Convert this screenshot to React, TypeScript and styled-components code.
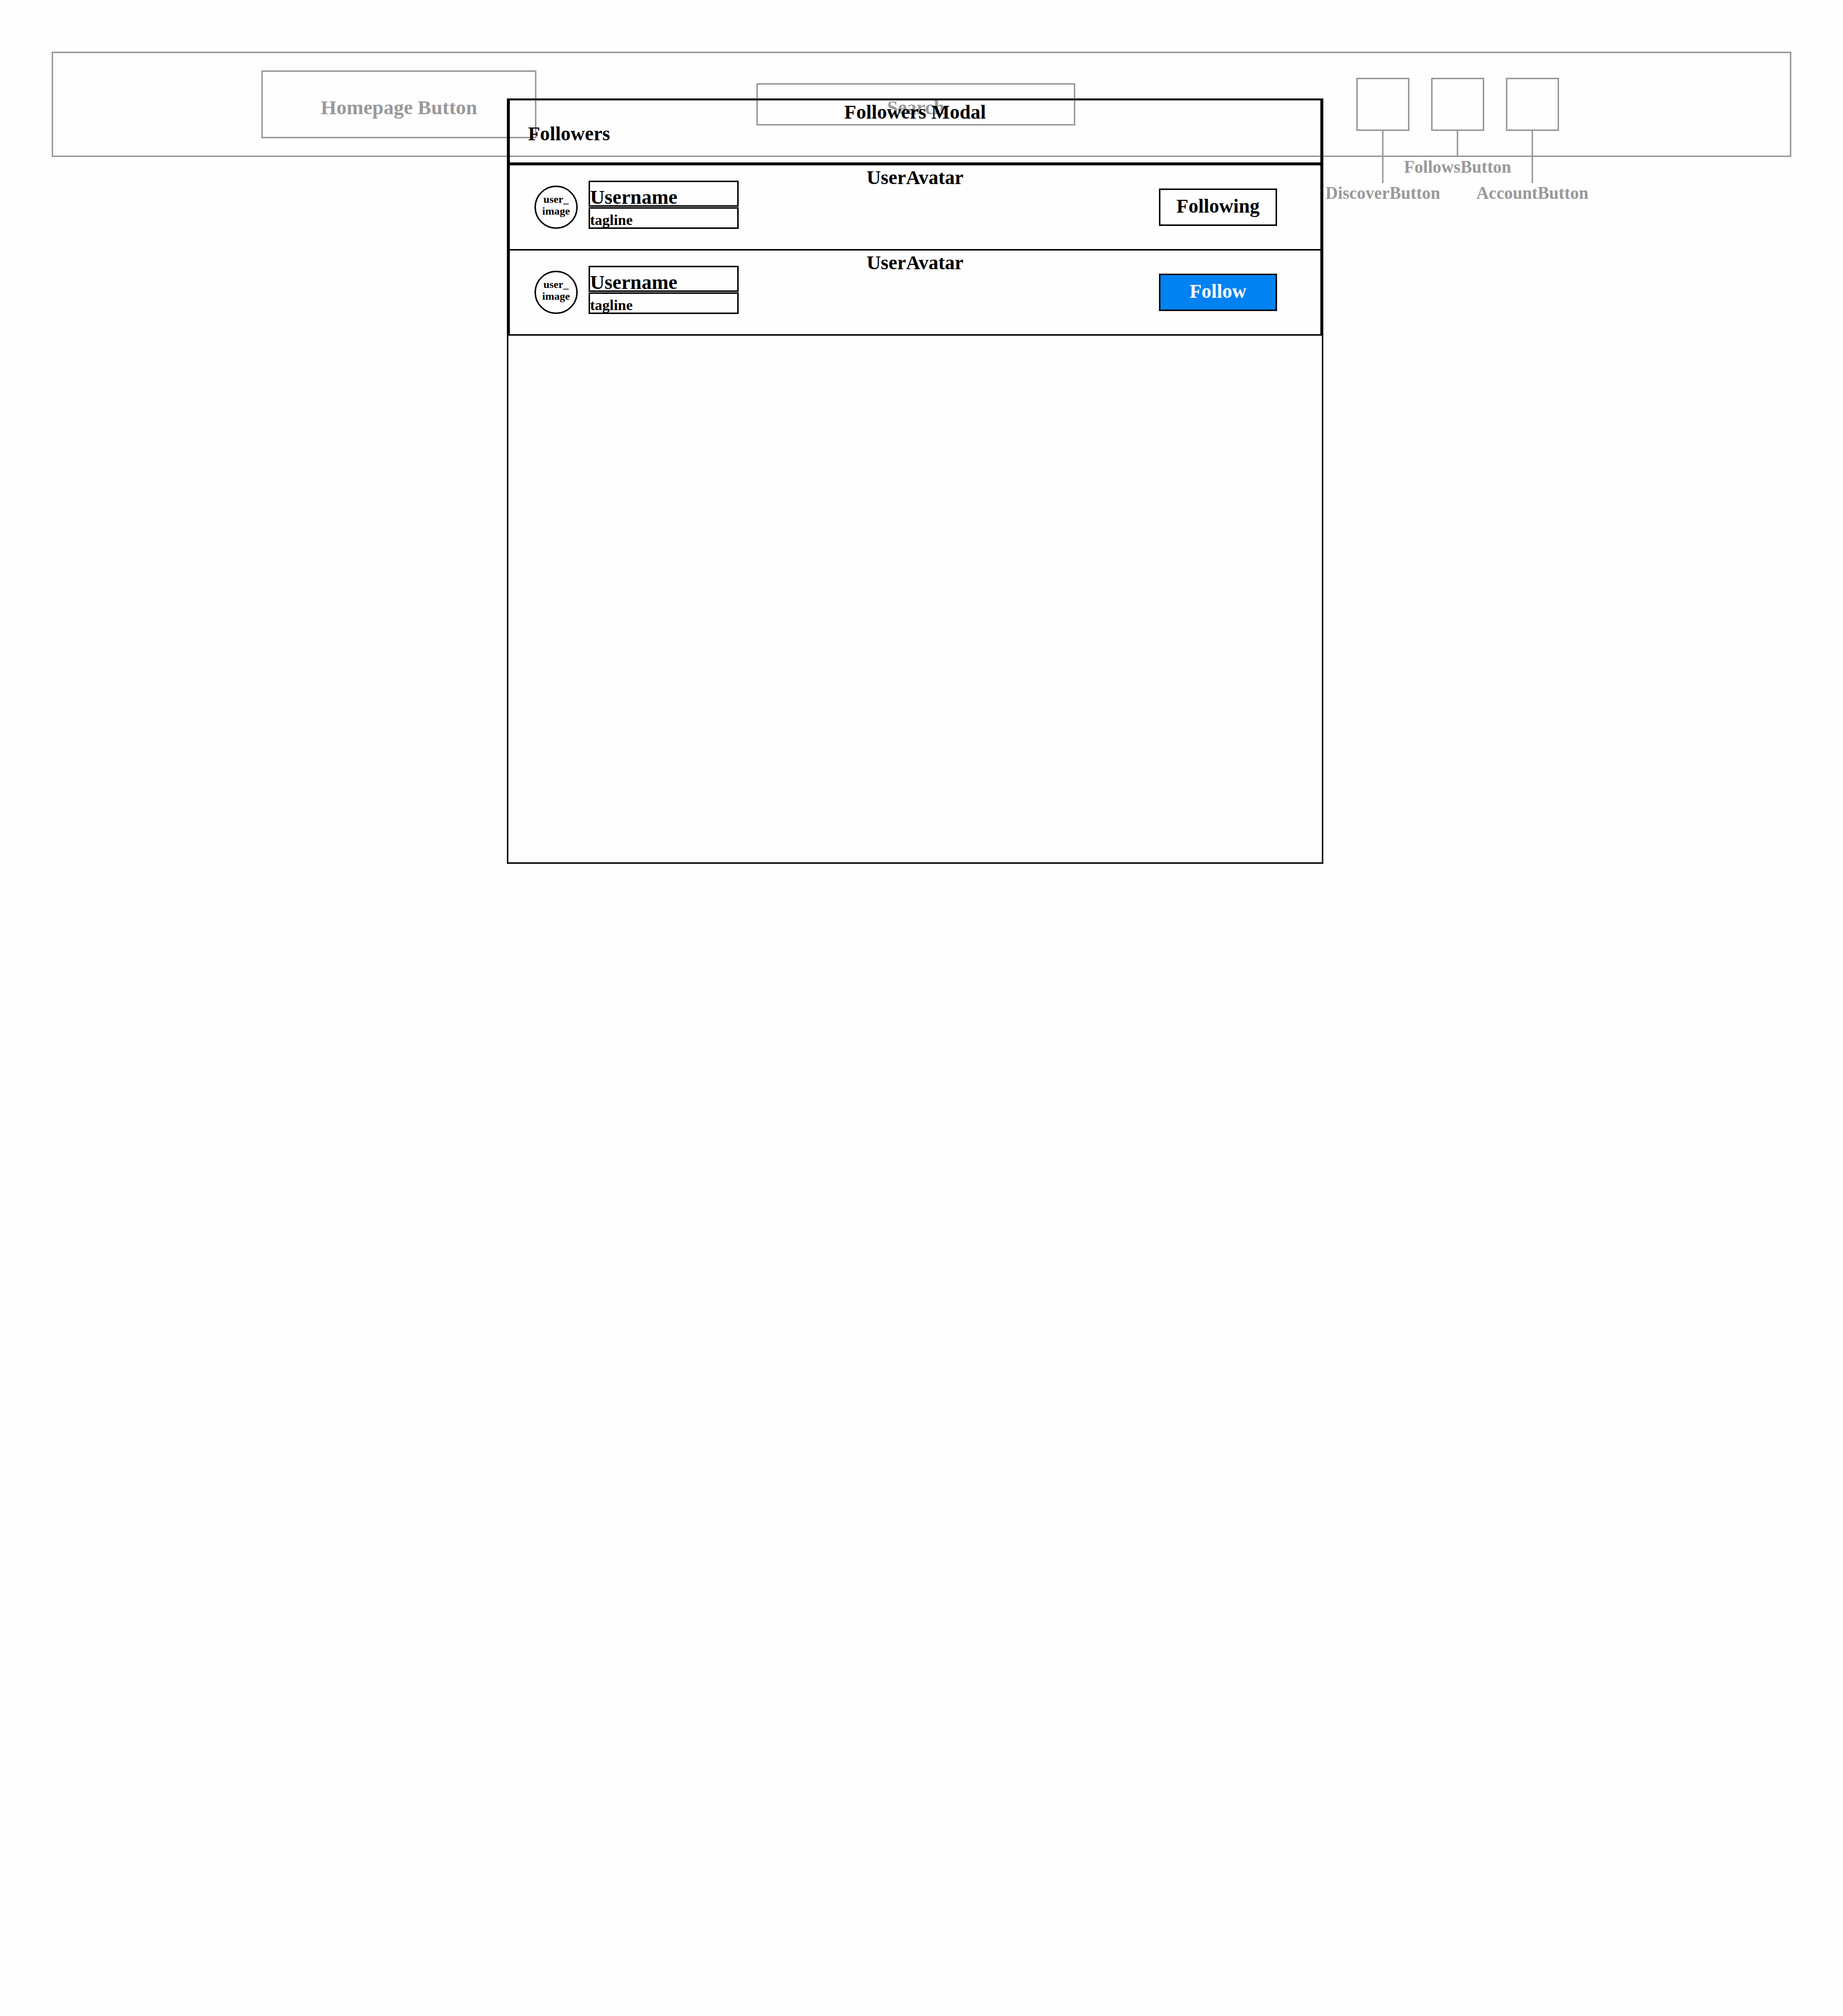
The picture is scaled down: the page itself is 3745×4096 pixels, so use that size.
import React, { useState } from "react";
import styled, { createGlobalStyle } from "styled-components";

const INK = "#000000";
const MUTED = "#999999";
const PAPER = "#fefefe";
const BLUE = "#0082f3";

const GlobalStyle = createGlobalStyle`
  *, *::before, *::after { box-sizing: border-box; }
  body {
    margin: 0;
    background: ${PAPER};
    color: ${INK};
    font-family: "Liberation Serif", serif;
    font-weight: 700;
  }
  button, input { font: inherit; color: inherit; border-radius: 0; margin: 0; }
`;

const Page = styled.div`
  position: relative;
  min-height: 100vh;
  padding: 105px;
`;

const TopBar = styled.header`
  display: grid;
  grid-template-columns: 423fr 559fr 447fr 647fr 571fr auto 469fr;
  align-items: center;
  padding: 35px 0;
  border: 3px solid ${MUTED};
  color: ${MUTED};
`;

const HomeButton = styled.button`
  grid-column: 2;
  height: 138px;
  padding: 12px 0 0;
  border: 3px solid ${MUTED};
  background: none;
  font-size: 41px;
`;

const SearchInput = styled.input`
  grid-column: 4;
  min-width: 0;
  height: 86px;
  padding: 12px 0 0;
  border: 3px solid ${MUTED};
  background: none;
  font-size: 40px;
  text-align: center;

  &::placeholder { color: ${MUTED}; opacity: 1; }
`;

const IconNav = styled.nav`
  grid-column: 6;
  display: flex;
  gap: 44px;
`;

const IconItem = styled.div`
  position: relative;
`;

const IconButton = styled.button`
  display: block;
  width: 108px;
  height: 108px;
  padding: 0;
  border: 3px solid ${MUTED};
  background: none;
`;

const Callout = styled.div`
  position: absolute;
  top: 100%;
  left: 50%;
  transform: translateX(-50%);
  display: flex;
  flex-direction: column;
  align-items: center;
`;

const CalloutLine = styled.span<{ $long: boolean }>`
  width: 3px;
  height: ${(p) => (p.$long ? 106 : 53)}px;
  background: ${MUTED};
`;

const CalloutLabel = styled.span`
  font-size: 35px;
  line-height: 42px;
`;

const Modal = styled.section`
  position: absolute;
  top: 200px;
  left: 27.5%;
  right: 28.2%;
  min-height: 1555px;
  border: 3px solid ${INK};
`;

const ModalHeader = styled.div`
  margin-top: -2px;
  padding: 2px 0 36px;
  border: 3px solid ${INK};
  font-size: 40px;
  line-height: 44px;
`;

const ModalTitle = styled.div`
  text-align: center;
`;

const ModalHeading = styled.h2`
  margin: 0;
  padding-left: 37px;
  font-size: inherit;
`;

const UserList = styled.ul`
  margin: 0;
  padding: 0;
  list-style: none;
`;

const UserRow = styled.li`
  display: grid;
  grid-template-columns: minmax(0, 1fr) auto minmax(0, 1fr);
  align-items: start;
  border: 3px solid ${INK};

  & + & { margin-top: -3px; }
`;

const UserInfo = styled.div`
  display: flex;
  align-items: flex-end;
  gap: 22px;
  padding: 31px 0 41px 50px;
`;

const UserImage = styled.div`
  display: flex;
  flex-direction: column;
  align-items: center;
  justify-content: center;
  width: 88px;
  height: 88px;
  padding-bottom: 8px;
  border: 3px solid ${INK};
  border-radius: 50%;
  font-size: 22px;
  line-height: 24px;
`;

const UserText = styled.div`
  display: flex;
  flex-direction: column;
  gap: 1px;
  width: 305px;
`;

const Username = styled.div`
  padding-top: 13px;
  border: 3px solid ${INK};
  font-size: 41px;
  line-height: 34px;
`;

const Tagline = styled.div`
  padding-top: 8px;
  border: 3px solid ${INK};
  font-size: 30px;
  line-height: 30px;
`;

const RowLabel = styled.div`
  padding-top: 3px;
  font-size: 40px;
  line-height: 44px;
`;

const FollowButton = styled.button<{ $following: boolean }>`
  justify-self: end;
  width: 240px;
  height: 76px;
  margin: 47px 88px 0 0;
  padding: 0 0 5px;
  border: 3px solid ${INK};
  background: ${(p) => (p.$following ? "transparent" : BLUE)};
  color: ${(p) => (p.$following ? INK : "#ffffff")};
  font-size: 40px;
`;

const icons = [
  { id: "discover", label: "DiscoverButton", long: true },
  { id: "follows", label: "FollowsButton", long: false },
  { id: "account", label: "AccountButton", long: true },
];

function UserAvatar({ initial }: { initial: boolean }) {
  const [following, setFollowing] = useState(initial);
  return (
    <UserRow>
      <UserInfo>
        <UserImage>
          <span>user_</span>
          <span>image</span>
        </UserImage>
        <UserText>
          <Username>Username</Username>
          <Tagline>tagline</Tagline>
        </UserText>
      </UserInfo>
      <RowLabel>UserAvatar</RowLabel>
      <FollowButton $following={following} onClick={() => setFollowing(!following)}>
        {following ? "Following" : "Follow"}
      </FollowButton>
    </UserRow>
  );
}

export default function App() {
  return (
    <>
      <GlobalStyle />
      <Page>
        <TopBar>
          <HomeButton>Homepage Button</HomeButton>
          <SearchInput type="text" placeholder="Search" aria-label="Search" />
          <IconNav>
            {icons.map((icon) => (
              <IconItem key={icon.id}>
                <IconButton aria-labelledby={icon.id} />
                <Callout>
                  <CalloutLine $long={icon.long} />
                  <CalloutLabel id={icon.id}>{icon.label}</CalloutLabel>
                </Callout>
              </IconItem>
            ))}
          </IconNav>
        </TopBar>
        <Modal role="dialog" aria-labelledby="modal-title">
          <ModalHeader>
            <ModalTitle id="modal-title">Followers Modal</ModalTitle>
            <ModalHeading>Followers</ModalHeading>
          </ModalHeader>
          <UserList>
            <UserAvatar initial={true} />
            <UserAvatar initial={false} />
          </UserList>
        </Modal>
      </Page>
    </>
  );
}
